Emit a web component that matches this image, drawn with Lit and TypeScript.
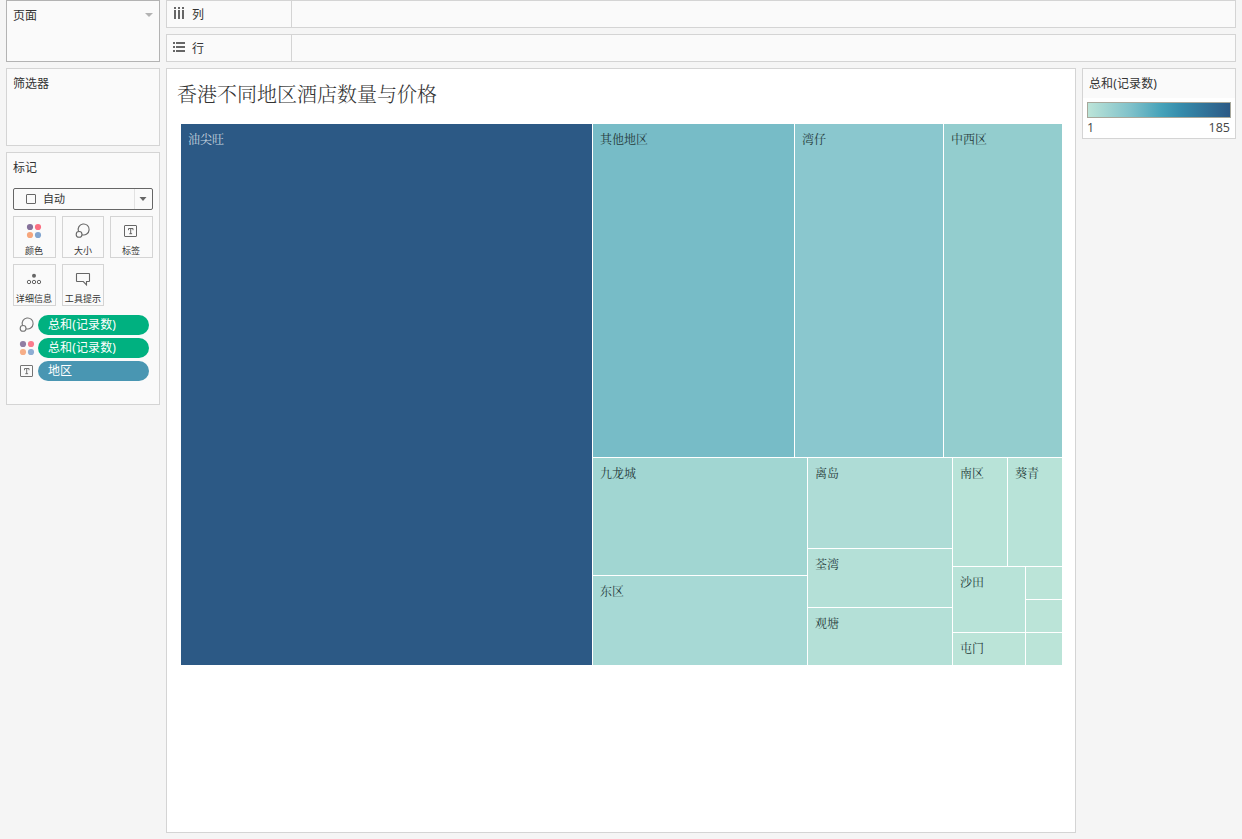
import { LitElement, html, css, svg } from "lit";
import { customElement } from "lit/decorators.js";

const sizeIcon = html`<svg class="icon" width="16" height="16" viewBox="0 0 16 16" fill="none" stroke="#666" stroke-width="1.1">
  <path d="M3.500 8.400A5.500 5.500 0 1 1 7 11.700"></path><circle cx="4.100" cy="11.400" r="2.900"></circle></svg>`;
const colorIcon = html`<svg class="icon" width="16" height="16" viewBox="0 0 16 16">
  <circle cx="4" cy="4" r="3.1" fill="#85719a"></circle><circle cx="12" cy="4" r="3.1" fill="#fb6f82"></circle>
  <circle cx="4" cy="12" r="3.1" fill="#f6a67c"></circle><circle cx="12" cy="12" r="3.1" fill="#82a5cf"></circle></svg>`;
const labelIcon = html`<svg class="icon" width="16" height="16" viewBox="0 0 16 16" fill="none" stroke="#666">
  <rect x="1.5" y="2.5" width="12" height="11" rx=".5"></rect>
  <path d="M5.500 7.200V5.500h4.500V7.200M7.700 5.500v5.500M6.300 10.700h2.800"></path></svg>`;
const detailIcon = html`<svg class="icon" width="16" height="16" viewBox="0 0 16 16" fill="none" stroke="#666">
  <circle cx="8" cy="4.800" r="2" fill="#666" stroke="none"></circle>
  <circle cx="3" cy="11" r="1.700"></circle><circle cx="8" cy="11" r="1.700"></circle><circle cx="13" cy="11" r="1.700"></circle></svg>`;
const tipIcon = html`<svg class="icon" width="16" height="16" viewBox="0 0 16 16" fill="none" stroke="#666" stroke-width="1.1">
  <path d="M2 2.500h12q.5 0 .5.500v7q0 .5-.5.5h-2.500v3.300L8.300 10.500H2q-.5 0-.5-.5V3q0-.5.5-.5z"></path></svg>`;
const columnsIcon = html`<svg width="12" height="12" viewBox="0 0 12 12" fill="#666">
  ${[1, 5, 9].map((x) => svg`<rect x=${x} y="0" width="2" height="2"></rect><rect x=${x} y="3" width="2" height="9"></rect>`)}</svg>`;
const rowsIcon = html`<svg width="12" height="12" viewBox="0 0 12 12" fill="#666">
  ${[1, 5, 9].map((y) => svg`<rect x="0" y=${y} width="2" height="2"></rect><rect x="3" y=${y} width="9" height="2"></rect>`)}</svg>`;

@customElement("app-root")
export class AppRoot extends LitElement {
  static styles = css`
    :host {
      display: flex;
      gap: 6px;
      box-sizing: border-box;
      width: 1242px;
      height: 839px;
      padding: 0 6px 6px;
      background: #f5f5f5;
      color: #333;
      font: 12px/16px "Noto Sans", "Noto Sans CJK SC", sans-serif;
      overflow: hidden;
    }
    * { box-sizing: border-box; }
    svg { display: block; flex: none; }
    .side { width: 154px; display: flex; flex-direction: column; gap: 6px; }
    .panel { border: 1px solid #d4d4d4; background: #fafafa; }
    .pages { height: 62px; border-color: #b3b3b3; padding: 7px 6px; display: flex; justify-content: space-between; }
    .pages svg { margin-top: 5px; }
    .filters { height: 78px; padding: 7px 6px; }
    .marks { height: 253px; padding: 7px 6px; }
    .select { margin-top: 12px; height: 22px; border: 1px solid #666; border-radius: 2px; display: flex; align-items: center; font-size: 11px; }
    .square { width: 10px; height: 10px; border: 1px solid #666; border-radius: 1px; margin: 0 7px 0 12px; }
    .auto { flex: 1; }
    .arrow { width: 18px; height: 20px; border-left: 1px solid #e2e2e2; display: grid; place-items: center; padding-right: 1px; }
    .buttons { margin-top: 6px; display: grid; grid-template-columns: 43px 42px 43px; grid-auto-rows: 42px; gap: 6px; }
    .button { border: 1px solid #d4d4d4; display: flex; flex-direction: column; align-items: center; padding-top: 6px; font-size: 9px; line-height: 12px; white-space: nowrap; letter-spacing: 0.1px; }
    .button.wide { padding-right: 1px; }
    .button .icon { margin-bottom: 6px; }
    .pills { margin-top: 9px; display: flex; flex-direction: column; gap: 3px; }
    .pillrow { display: flex; gap: 3px; align-items: center; padding-left: 6px; }
    .pillrow .icon { opacity: 0.9; }
    .pill { width: 111px; height: 20px; border-radius: 10px; background: #00b180; color: #fff; padding: 0 10px; line-height: 20px; letter-spacing: 0.12px; }
    .blue { background: #4996b2; }
    .main { flex: 1; display: flex; flex-direction: column; gap: 6px; }
    .shelf { height: 28px; display: flex; }
    .shelfname { width: 125px; border-right: 1px solid #d4d4d4; display: flex; align-items: flex-start; gap: 7px; padding: 6px 0 0 6px; }
    .shelfname span { padding-top: 0; }
    .below { flex: 1; display: flex; gap: 6px; align-items: flex-start; }
    .view { width: 910px; height: 765px; background: #fff; padding: 10px 13px 0 14px; }
    .title { font: 20px/30px "Noto Serif CJK SC", "Noto Serif SC", "Source Han Serif SC", "AR PL UMing CN", "Noto Sans CJK SC", serif; font-weight: 300; margin: 0 0 15px -4px; }
    .tree { width: 881px; height: 541px; background: #fff; font: 12px/16px "Noto Serif CJK SC", "Noto Serif SC", "Source Han Serif SC", "AR PL UMing CN", "Noto Sans CJK SC", serif; color: #263b3b; }
    .row, .col { display: flex; gap: 1px; min-width: 0; min-height: 0; }
    .col { flex-direction: column; }
    .cell { padding: 7px; overflow: hidden; flex: 1; white-space: nowrap; }
    .w411 { flex: 0 0 411px; } .w201 { flex: 0 0 201px; } .w148 { flex: 0 0 148px; }
    .w214 { flex: 0 0 214px; } .w144 { flex: 0 0 144px; } .w54 { flex: 0 0 54px; } .w72 { flex: 0 0 72px; }
    .h333 { flex: 0 0 333px; } .h117 { flex: 0 0 117px; } .h90 { flex: 0 0 90px; }
    .h58 { flex: 0 0 58px; } .h108 { flex: 0 0 108px; } .h65 { flex: 0 0 65px; } .h32 { flex: 0 0 32px; }
    .fill { flex: 1; }
    .c1 { background: #2c5985; color: #c5d3df; }
    .c2 { background: #77bcc7; } .c3 { background: #8ac7ce; } .c4 { background: #93cdce; }
    .c5 { background: #a1d6d2; } .c6 { background: #a7d9d5; } .c7 { background: #aedcd6; }
    .c8 { background: #b4e0d7; } .c9 { background: #b8e3d8; } .c10 { background: #bbe4d8; }
    .legend { width: 154px; height: 71px; background: #fff; }
    .legendtitle { height: 29px; background: #fafafa; padding: 7px 6px; letter-spacing: 0.12px; }
    .ramp { height: 16px; margin: 4px 4px 2px; border: 1px solid #a7a79b; background: linear-gradient(90deg, #bce4d8, #7fc1ca 30%, #45a2b9 52%, #358bab 66%, #2c5985); }
    .range { display: flex; justify-content: space-between; padding: 0 5px 0 4px; font: 12.5px/15px "Open Sans", "Noto Sans", sans-serif; color: #444; }
  `;

  render() {
    return html`
      <div class="side">
        <div class="panel pages">页面<svg width="8" height="5" viewBox="0 0 8 5"><path d="M0 0h8L4 4z" fill="#b3b3b3"></path></svg></div>
        <div class="panel filters">筛选器</div>
        <div class="panel marks">
          <div>标记</div>
          <div class="select">
            <span class="square"></span><span class="auto">自动</span>
            <span class="arrow"><svg width="8" height="4" viewBox="0 0 8 4"><path d="M.5 0h7L4 4z" fill="#666"></path></svg></span>
          </div>
          <div class="buttons">
            <div class="button wide">${colorIcon}颜色</div>
            <div class="button">${sizeIcon}大小</div>
            <div class="button wide">${labelIcon}标签</div>
            <div class="button wide">${detailIcon}详细信息</div>
            <div class="button">${tipIcon}工具提示</div>
          </div>
          <div class="pills">
            <div class="pillrow">${sizeIcon}<span class="pill">总和(记录数)</span></div>
            <div class="pillrow">${colorIcon}<span class="pill">总和(记录数)</span></div>
            <div class="pillrow">${labelIcon}<span class="pill blue">地区</span></div>
          </div>
        </div>
      </div>
      <div class="main">
        <div class="panel shelf"><div class="shelfname">${columnsIcon}<span>列</span></div></div>
        <div class="panel shelf"><div class="shelfname">${rowsIcon}<span>行</span></div></div>
        <div class="below">
          <div class="panel view">
            <div class="title">香港不同地区酒店数量与价格</div>
            <div class="tree row">
              <div class="cell w411 c1">油尖旺</div>
              <div class="col fill">
                <div class="row h333">
                  <div class="cell w201 c2">其他地区</div>
                  <div class="cell w148 c3">湾仔</div>
                  <div class="cell c4">中西区</div>
                </div>
                <div class="row fill">
                  <div class="col w214">
                    <div class="cell h117 c5">九龙城</div>
                    <div class="cell c6">东区</div>
                  </div>
                  <div class="col w144">
                    <div class="cell h90 c7">离岛</div>
                    <div class="cell h58 c8">荃湾</div>
                    <div class="cell c8">观塘</div>
                  </div>
                  <div class="col fill">
                    <div class="row h108">
                      <div class="cell w54 c9">南区</div>
                      <div class="cell c9">葵青</div>
                    </div>
                    <div class="row fill">
                      <div class="col w72">
                        <div class="cell h65 c9">沙田</div>
                        <div class="cell c10">屯门</div>
                      </div>
                      <div class="col fill">
                        <div class="cell h32 c10"></div>
                        <div class="cell h32 c10"></div>
                        <div class="cell c10"></div>
                      </div>
                    </div>
                  </div>
                </div>
              </div>
            </div>
          </div>
          <div class="panel legend">
            <div class="legendtitle">总和(记录数)</div>
            <div class="ramp"></div>
            <div class="range"><span>1</span><span>185</span></div>
          </div>
        </div>
      </div>
    `;
  }
}
